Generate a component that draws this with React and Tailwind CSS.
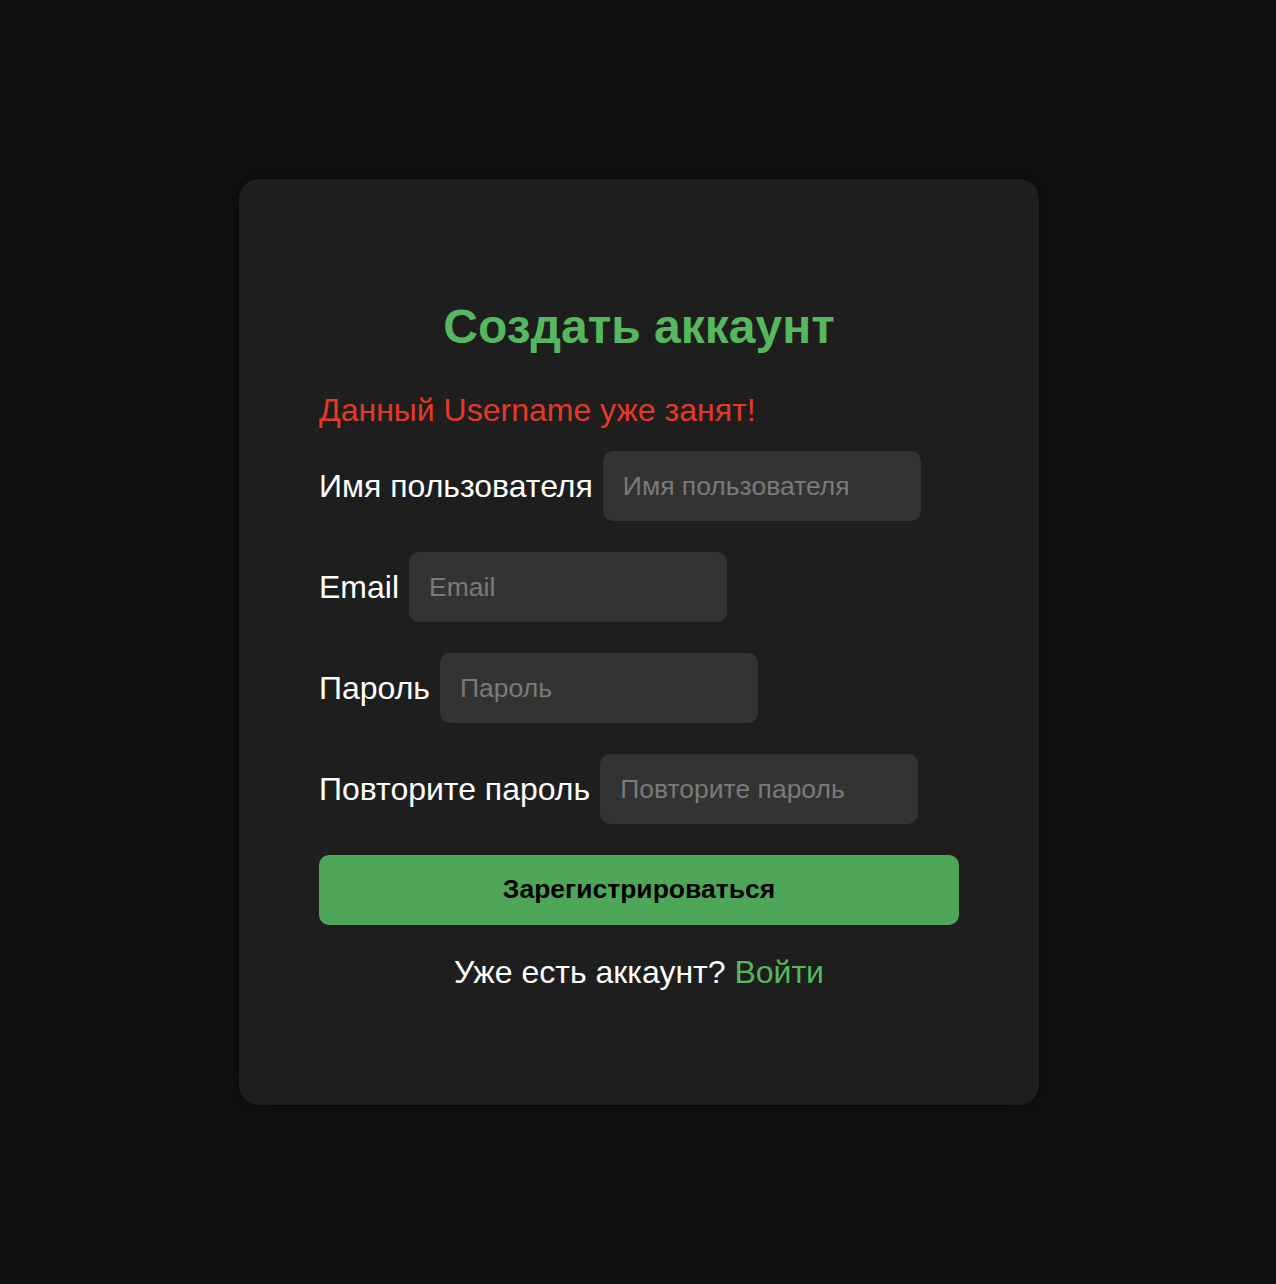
import React from 'react';

const fields = [
  { label: 'Имя пользователя', type: 'text' },
  { label: 'Email', type: 'email' },
  { label: 'Пароль', type: 'password' },
  { label: 'Повторите пароль', type: 'password' },
];

export default function App() {
  return (
    <div
      className="min-h-[1284px] bg-[#111111] flex items-center justify-center"
      style={{ fontFamily: '"Liberation Sans", Arial, sans-serif' }}
    >
      <div className="ml-[2px] w-[800px] h-[926px] bg-[#1e1e1e] rounded-[20px] shadow-[0_0_20px_rgba(0,0,0,0.5)] px-20 pt-[120px]">
        <h1 className="text-[48px] leading-[55px] font-bold text-[#55b75e] text-center">Создать аккаунт</h1>
        <p className="mt-[38px] text-[32px] leading-[37px] text-[#e53927]">Данный Username уже занят!</p>

        <form className="mt-[22px] flex flex-col gap-[31px]" onSubmit={e => e.preventDefault()}>
          {fields.map(f => (
            <div key={f.label} className="flex items-center gap-[10px]">
              <label className="text-[32px] text-white whitespace-nowrap">{f.label}</label>
              <input
                type={f.type}
                placeholder={f.label}
                className="w-[318px] h-[70px] px-5 rounded-[10px] bg-[#333333] text-white text-[26.5px] placeholder:text-[#7a7a7a] outline-none"
              />
            </div>
          ))}
          <button
            type="submit"
            className="w-full h-[70px] rounded-[10px] bg-[#4ea758] text-black text-[26.5px] font-bold"
          >
            Зарегистрироваться
          </button>
        </form>

        <p className="mt-[29px] text-center text-[32px] leading-[37px] text-white">
          Уже есть аккаунт? <a href="#" className="text-[#55b75e]">Войти</a>
        </p>
      </div>
    </div>
  );
}
